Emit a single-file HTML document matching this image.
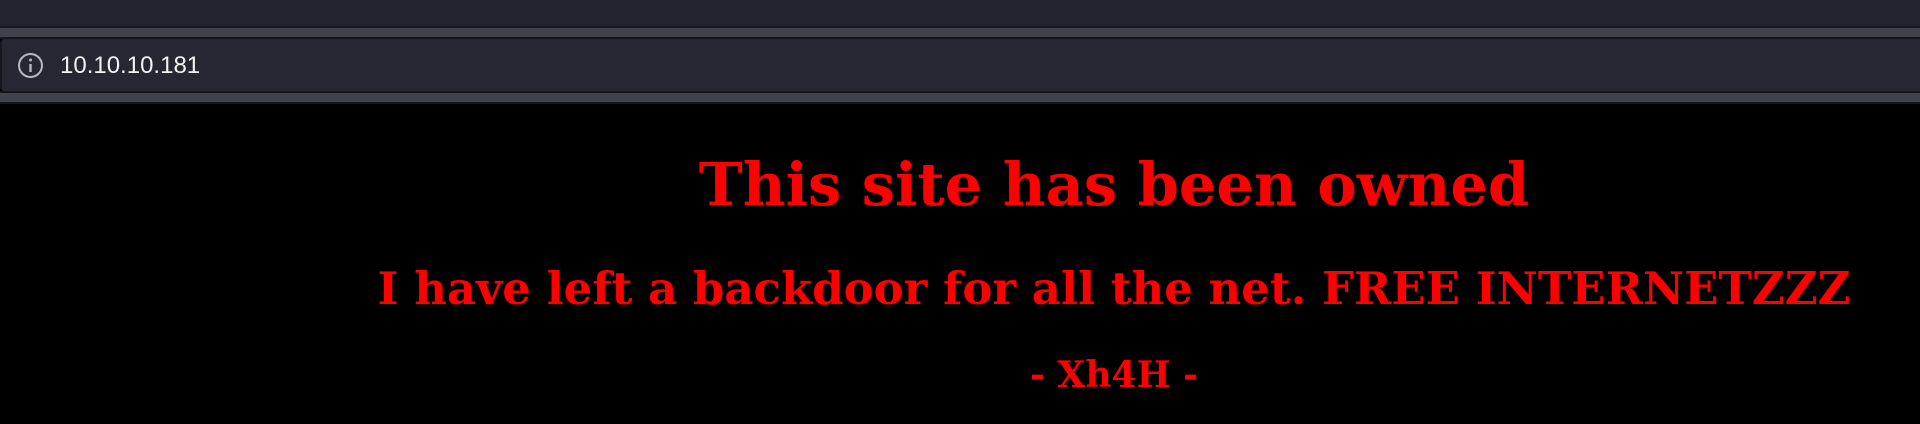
<!DOCTYPE html>
<html><head><style>
body{margin:0;width:1920px;height:424px;background:#000;overflow:hidden;position:relative;font-family:"DejaVu Serif",serif}
.b{position:absolute;left:0;width:1920px}
.t{position:absolute;left:1114px;transform:translateX(-50%);white-space:nowrap;color:#ff0000;font-weight:bold;line-height:1}
</style></head><body>
<div class="b" style="top:0;height:26px;background:#23252e"></div>
<div class="b" style="top:26px;height:2px;background:#16171c"></div>
<div class="b" style="top:28px;height:9px;background:#40434c"></div>
<div class="b" style="top:37px;height:2px;background:#16171c"></div>
<div class="b" style="top:39px;height:52px;background:#252732;border-left:2px solid #16171c;border-radius:4px 0 0 4px;box-sizing:border-box"></div>
<div class="b" style="top:91px;height:2px;background:#16171c"></div>
<div class="b" style="top:93px;height:9px;background:#40434c"></div>
<div class="b" style="top:102px;height:2px;background:#16171c"></div>
<svg style="position:absolute;left:17px;top:52px" width="27" height="27" viewBox="0 0 27 27"><circle cx="13.5" cy="13.5" r="11.5" fill="none" stroke="#b8b9bd" stroke-width="2"/><rect x="12.3" y="12" width="2.4" height="8" fill="#b8b9bd"/><circle cx="13.5" cy="8" r="1.5" fill="#b8b9bd"/></svg>
<div style="position:absolute;left:60px;top:52px;font-family:'Liberation Sans',sans-serif;font-size:24px;color:#f2f2f2">10.10.10.181</div>
<div class="t" style="top:155px;font-size:59px">This site has been owned</div>
<div class="t" style="top:266px;font-size:45px">I have left a backdoor for all the net. FREE INTERNETZZZ</div>
<div class="t" style="top:357px;font-size:36px">- Xh4H -</div>
</body></html>
